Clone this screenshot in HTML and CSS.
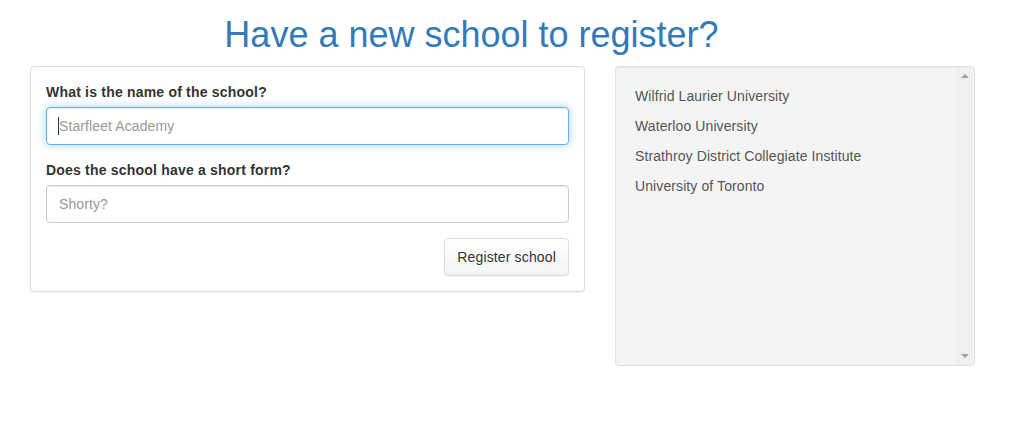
FILE: index.html
```html
<!DOCTYPE html>
<html lang="en">
<head>
<meta charset="utf-8">
<title>Register school</title>
<link rel="stylesheet" href="styles.css">
</head>
<body>
  <header class="page-header">
    <h1 class="title">Have a new school to register?</h1>
  </header>
  <main class="row">
    <section class="panel">
      <form class="form">
        <div class="form-group">
          <label class="label" for="name">What is the name of the school?</label>
          <div class="input-wrap">
            <input class="input input-focus" id="name" type="text" placeholder="Starfleet Academy">
            <span class="caret"></span>
          </div>
        </div>
        <div class="form-group">
          <label class="label" for="short">Does the school have a short form?</label>
          <input class="input" id="short" type="text" placeholder="Shorty?">
        </div>
        <div class="actions">
          <button class="btn" type="button">Register school</button>
        </div>
      </form>
    </section>
    <aside class="well">
      <ul class="school-list">
        <li>Wilfrid Laurier University</li>
        <li>Waterloo University</li>
        <li>Strathroy District Collegiate Institute</li>
        <li>University of Toronto</li>
      </ul>
      <div class="scrollbar">
        <span class="arrow arrow-up"></span>
        <span class="arrow arrow-down"></span>
      </div>
    </aside>
  </main>
</body>
</html>
```

FILE: styles.css
```css
* { box-sizing: border-box; }

html, body {
  margin: 0;
  padding: 0;
  background: #fff;
  font-family: "Liberation Sans", Arial, Helvetica, sans-serif;
  font-size: 14px;
  line-height: 20px;
  color: #333;
}

.page-header {
  padding-top: 15px;
  padding-right: 86px;
  text-align: center;
}

.title {
  margin: 0;
  font-size: 36px;
  line-height: 1.1;
  font-weight: 400;
  color: #337ab7;
}

.row {
  display: flex;
  align-items: flex-start;
  gap: 30px;
  margin-top: 11px;
  padding-left: 30px;
}

.panel {
  width: 555px;
  border: 1px solid #ddd;
  border-radius: 4px;
  background: #fff;
  padding: 15px;
  box-shadow: 0 1px 1px rgba(0,0,0,.05);
}

.form-group {
  margin-bottom: 15px;
}

.label {
  display: block;
  font-weight: 700;
  margin-bottom: 5px;
  color: #333;
  letter-spacing: 0.2px;
}

.input-wrap {
  position: relative;
}

.input {
  display: block;
  width: 100%;
  height: 38px;
  padding: 8px 12px;
  font-family: inherit;
  font-size: 14px;
  line-height: 20px;
  letter-spacing: 0.1px;
  color: #555;
  background: #fff;
  border: 1px solid #ccc;
  border-radius: 4px;
  box-shadow: inset 0 1px 1px rgba(0,0,0,.075);
  outline: none;
}

.input::placeholder {
  color: #999;
  opacity: 1;
}

.input-focus {
  border-color: #66afe9;
  box-shadow: inset 0 1px 1px rgba(0,0,0,.075), 0 0 8px rgba(102,175,233,.6);
}

.caret {
  position: absolute;
  left: 12px;
  top: 10px;
  width: 1px;
  height: 18px;
  background: #333;
}

.actions {
  display: flex;
  justify-content: flex-end;
}

.btn {
  height: 38px;
  padding: 8px 12px;
  font-family: inherit;
  font-size: 14px;
  line-height: 20px;
  letter-spacing: 0.15px;
  color: #333;
  background: linear-gradient(to bottom, #fff 0%, #f3f3f3 100%);
  border: 1px solid #ddd;
  border-radius: 4px;
  box-shadow: inset 0 1px 0 rgba(255,255,255,.15), 0 1px 1px rgba(0,0,0,.05);
  cursor: pointer;
}

.well {
  display: flex;
  width: 360px;
  height: 300px;
  background: #f4f4f4;
  border: 1px solid #e0e0e0;
  border-radius: 4px;
  box-shadow: inset 0 1px 1px rgba(0,0,0,.05);
}

.school-list {
  flex: 1;
  list-style: none;
  margin: 0;
  padding: 14px 0 0 19px;
}

.school-list li {
  line-height: 30px;
  color: #555;
  letter-spacing: 0.1px;
}

.scrollbar {
  width: 17px;
  margin-right: 1px;
  background: #efefef;
  display: flex;
  flex-direction: column;
  justify-content: space-between;
  align-items: center;
  padding: 7px 0 7px;
}

.arrow {
  width: 0;
  height: 0;
  border-left: 4px solid transparent;
  border-right: 4px solid transparent;
}

.arrow-up {
  border-bottom: 4px solid #a3a3a3;
}

.arrow-down {
  border-top: 4px solid #a3a3a3;
}
```
